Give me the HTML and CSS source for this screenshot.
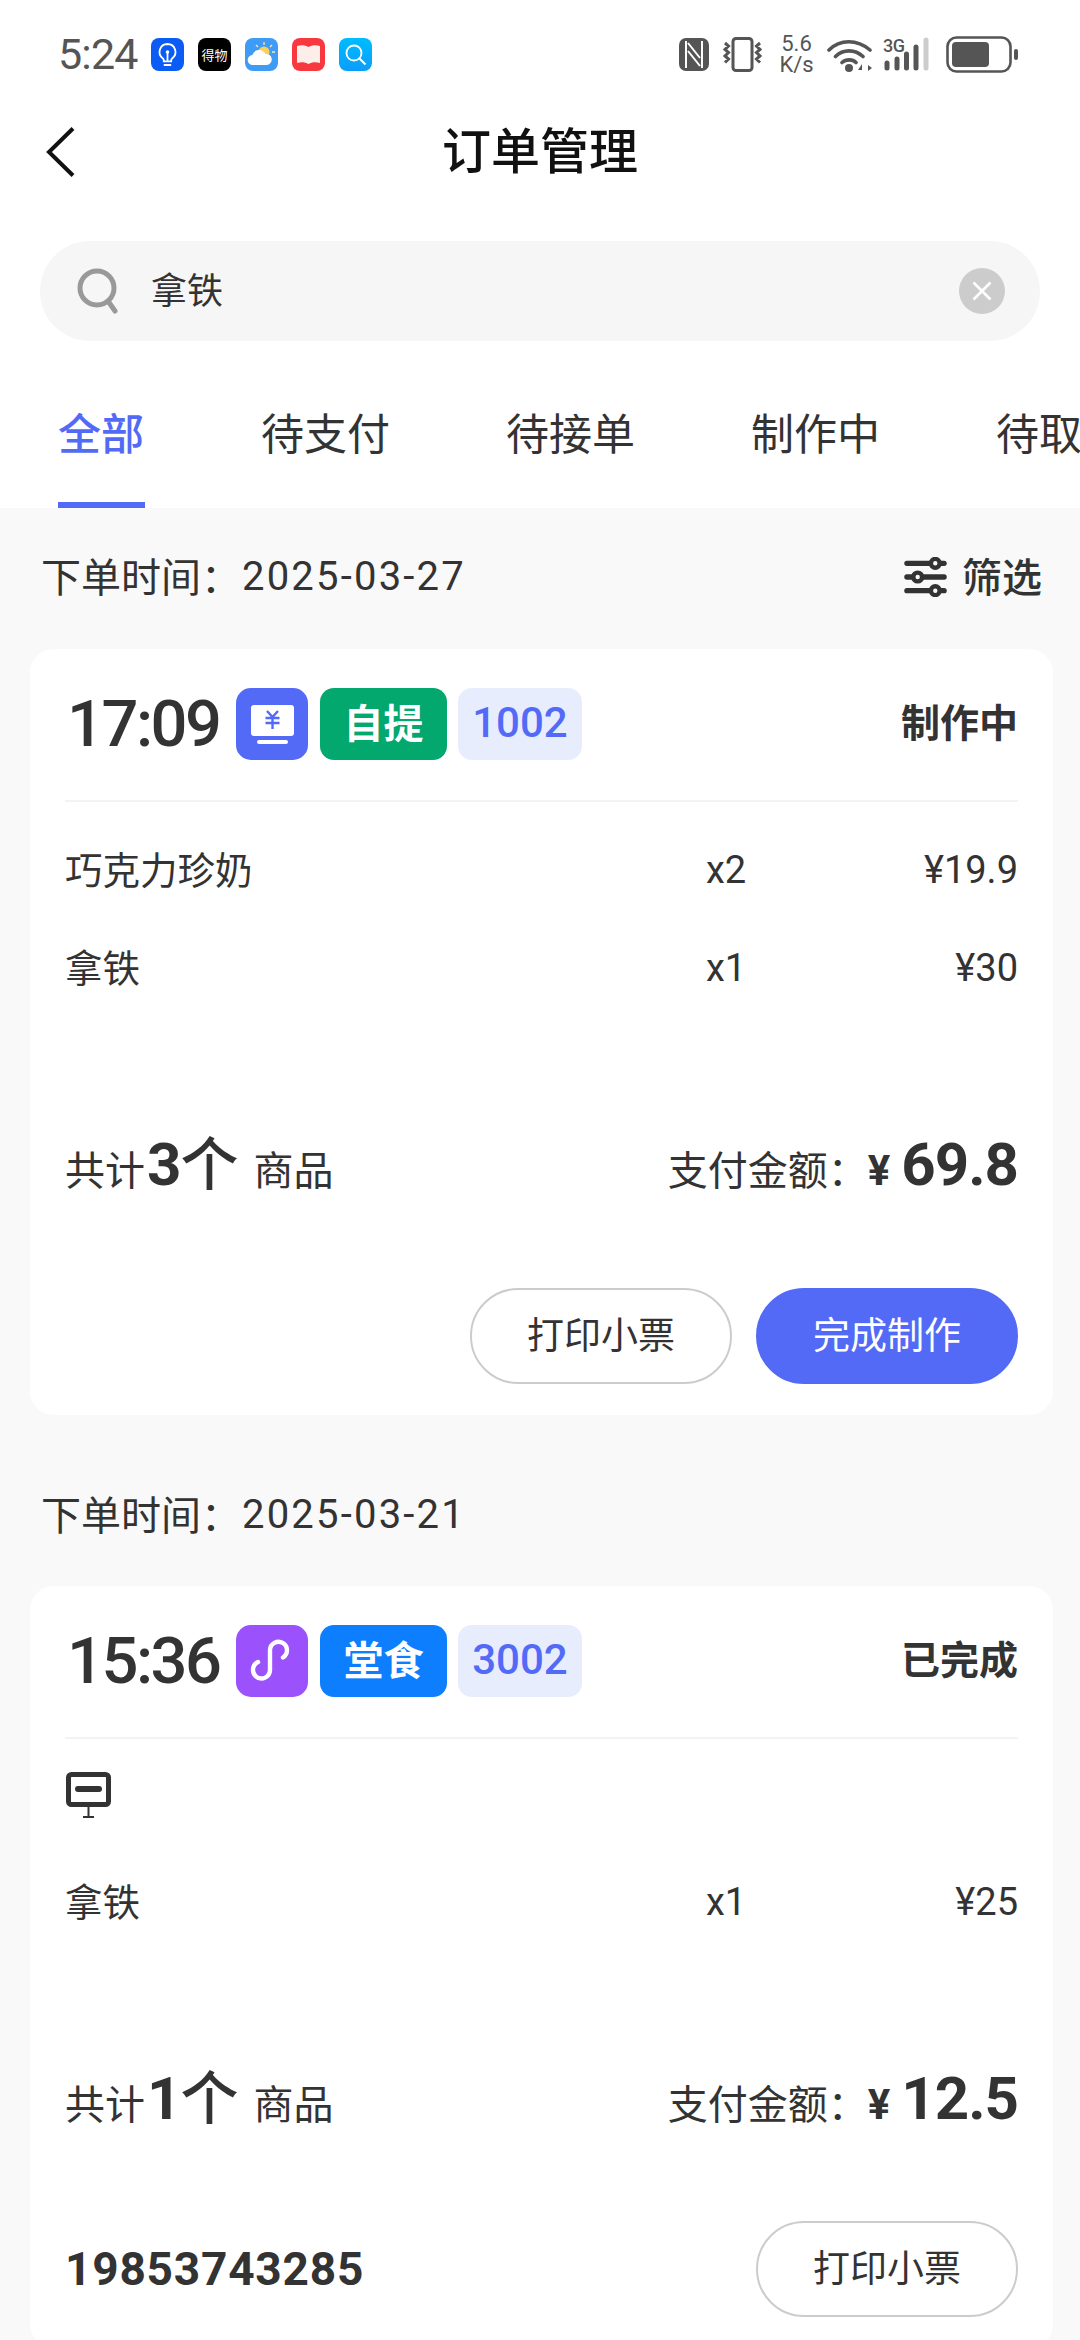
FILE: index.html
```html
<!DOCTYPE html>
<html lang="zh">
<head>
<meta charset="utf-8">
<title>订单管理</title>
<link rel="stylesheet" href="styles.css">
</head>
<body>
<div class="page">
  <header class="top">
    <div class="status">
      <div class="status-left">
        <span class="clock">5:24</span>
        <div class="apps">
          <svg class="app" viewBox="0 0 33 33"><rect width="33" height="33" rx="8" fill="#0b5cf5"/><path d="M16.5 6a8 8 0 0 0-4.6 14.5c.6.5.9 1 .9 1.8v1h7.4v-1c0-.8.3-1.3.9-1.8A8 8 0 0 0 16.500 6z" fill="none" stroke="#fff" stroke-width="1.800"/><path d="M16.500 14v9M13.500 27h6" stroke="#fff" stroke-width="1.800" stroke-linecap="round"/><circle cx="16.500" cy="14" r="1.800" fill="#fff"/></svg>
          <span class="app app-black">得物</span>
          <svg class="app" viewBox="0 0 33 33"><rect width="33" height="33" rx="8" fill="#3f9cf6"/><circle cx="19" cy="14" r="5.500" fill="#fbcf5a"/><path d="M19 4v3M27 7l-2 2M30 14h-3M11 7l2 2" stroke="#ffe9ae" stroke-width="1.300"/><path d="M8 27a5 5 0 0 1-.6-10 7 7 0 0 1 13-1 5.500 5.500 0 0 1 1.600 11z" fill="#fff"/></svg>
          <svg class="app" viewBox="0 0 33 33"><rect width="33" height="33" rx="8" fill="#f8383f"/><path d="M5 8c4-1 8-1 11.500 1C20 7 24 7 28 8v17c-4-1-8-1-11.500 1C13 24 9 24 5 25z" fill="#fdeeea"/></svg>
          <svg class="app" viewBox="0 0 33 33"><defs><linearGradient id="sg" x1="0" y1="0" x2="0" y2="1"><stop offset="0" stop-color="#00bcff"/><stop offset="1" stop-color="#0a9dfb"/></linearGradient></defs><rect width="33" height="33" rx="8" fill="url(#sg)"/><circle cx="15" cy="15" r="7.500" fill="none" stroke="#fff" stroke-width="1.800"/><path d="M20.500 20.500l6 6" stroke="#fff" stroke-width="2"/></svg>
        </div>
      </div>
      <div class="status-right">
        <svg class="ic-nfc" viewBox="0 0 30 33"><rect width="30" height="33" rx="7" fill="#555"/><path d="M7 3v27M23 3v27M9 5l12 15M9 13l12 15" fill="none" stroke="#fff" stroke-width="2"/></svg>
        <svg class="ic-vib" viewBox="0 0 41 35"><rect x="11" y="1.500" width="19" height="32" rx="3" fill="none" stroke="#555" stroke-width="3"/><path d="M3 6l3.500 3-3.500 3.500 3.500 3-3.500 3.500 3.500 3-3.500 3.500M38 6l-3.500 3 3.500 3.500-3.500 3 3.500 3.500-3.500 3 3.500 3.500" fill="none" stroke="#555" stroke-width="3"/></svg>
        <div class="speed"><span>5.6</span><span>K/s</span></div>
        <svg class="ic-wifi" viewBox="0 0 45 35"><path d="M2 13C13 2 30 2 43 13M8.500 19.500C16 12 28 12 36 19.500M15 25.500c4-3.500 10.500-3.500 14 0" fill="none" stroke="#555" stroke-width="3.600" stroke-linecap="round"/><circle cx="22" cy="31" r="4" fill="#555"/><path d="M35 27l-4 6h4zM38 26v9M41 28v6l4-3z" fill="#555"/></svg>
        <div class="signal">
          <span class="net">3G</span>
          <svg class="ic-bars" viewBox="0 0 50 35"><path d="M4 26v5M14 22v9M23.500 17v14M33 10v21" stroke="#555" stroke-width="5" stroke-linecap="round"/><path d="M43 3v28" stroke="#ccc" stroke-width="5" stroke-linecap="round"/></svg>
        </div>
        <svg class="ic-batt" viewBox="0 0 72 37"><rect x="1.500" y="1.500" width="63" height="34" rx="9" fill="none" stroke="#555" stroke-width="2.600"/><rect x="6" y="6" width="37" height="25" rx="4" fill="#555"/><rect x="68" y="13" width="4" height="11" rx="2" fill="#555"/></svg>
      </div>
    </div>

    <nav class="nav">
      <svg class="back" viewBox="0 0 30 50"><path d="M27 1.500 3 25l24 23.500" fill="none" stroke="#111" stroke-width="4"/></svg>
      <h1 class="title">订单管理</h1>
    </nav>

    <div class="search">
      <svg class="search-ic" viewBox="0 0 42 46"><circle cx="20" cy="20" r="17" fill="none" stroke="#999" stroke-width="5"/><path d="M31 33l7 10" stroke="#999" stroke-width="5" stroke-linecap="round"/></svg>
      <span class="search-text">拿铁</span>
      <svg class="clear" viewBox="0 0 46 46"><circle cx="23" cy="23" r="23" fill="#ccc"/><path d="M14.500 14.500l17 17M31.500 14.500l-17 17" stroke="#fff" stroke-width="2.600"/></svg>
    </div>

    <div class="tabs">
      <span class="tab tab-on">全部</span>
      <span class="tab">待支付</span>
      <span class="tab">待接单</span>
      <span class="tab">制作中</span>
      <span class="tab">待取餐</span>
    </div>
  </header>

  <main class="list">
    <div class="date-row">
      <span class="date"><span class="date-label">下单时间：</span><span class="date-num">2025-03-27</span></span>
      <span class="filter">
        <svg class="filter-ic" viewBox="0 0 44 40"><path d="M3 6h38M3 20h38M3 34h38" stroke="#333" stroke-width="5.500" stroke-linecap="round"/><circle cx="32" cy="6" r="4.500" fill="#f9f9f9" stroke="#333" stroke-width="4.500"/><circle cx="14" cy="20" r="4.500" fill="#f9f9f9" stroke="#333" stroke-width="4.500"/><circle cx="32" cy="34" r="4.500" fill="#f9f9f9" stroke="#333" stroke-width="4.500"/></svg>
        <span class="filter-text">筛选</span>
      </span>
    </div>

    <section class="card">
      <div class="card-head">
        <span class="time">17:09</span>
        <svg class="src" viewBox="0 0 72 72"><rect width="72" height="72" rx="15" fill="#536af6"/><rect x="15" y="17" width="43" height="31" rx="3" fill="#fff"/><rect x="21" y="52" width="31" height="4" rx="2" fill="#fff"/><path d="M31 23l5.500 6 5.500-6M29.500 30h14M29.500 35h14M36.500 29v12" fill="none" stroke="#536af6" stroke-width="2.400"/></svg>
        <span class="kind kind-green">自提</span>
        <span class="code">1002</span>
        <span class="state">制作中</span>
      </div>
      <div class="items">
        <div class="item"><span class="item-name">巧克力珍奶</span><span class="item-qty">x2</span><span class="item-price">¥19.9</span></div>
        <div class="item"><span class="item-name">拿铁</span><span class="item-qty">x1</span><span class="item-price">¥30</span></div>
      </div>
      <div class="summary">
        <span class="count">共计<b class="count-num">3</b><b class="count-unit">个</b><span class="count-tail">商品</span></span>
        <span class="pay">支付金额：<b class="yen">¥</b><b class="amount">69.8</b></span>
      </div>
      <div class="actions">
        <span class="btn">打印小票</span>
        <span class="btn btn-main">完成制作</span>
      </div>
    </section>

    <div class="date-row date-row-next">
      <span class="date"><span class="date-label">下单时间：</span><span class="date-num">2025-03-21</span></span>
    </div>

    <section class="card">
      <div class="card-head">
        <span class="time">15:36</span>
        <svg class="src" viewBox="0 0 72 72"><rect width="72" height="72" rx="15" fill="#9b51fb"/><path d="M21 38c-4 2-5 5-5 8a8.500 8.500 0 0 0 17 0V26a8.500 8.500 0 1 1 13 7.500" transform="translate(1 -1)" fill="none" stroke="#fff" stroke-width="4.400" stroke-linecap="round"/></svg>
        <span class="kind kind-blue">堂食</span>
        <span class="code">3002</span>
        <span class="state">已完成</span>
      </div>
      <div class="table-ic-row">
        <svg class="table-ic" viewBox="0 0 45 46"><rect x="2.500" y="2.500" width="40" height="30" rx="3" fill="none" stroke="#333" stroke-width="5"/><rect x="9" y="14" width="27" height="6" rx="3" fill="#333"/><path d="M22.500 34v11M17 45h11" stroke="#333" stroke-width="2"/></svg>
      </div>
      <div class="items items-tight">
        <div class="item"><span class="item-name">拿铁</span><span class="item-qty">x1</span><span class="item-price">¥25</span></div>
      </div>
      <div class="summary">
        <span class="count">共计<b class="count-num">1</b><b class="count-unit">个</b><span class="count-tail">商品</span></span>
        <span class="pay">支付金额：<b class="yen">¥</b><b class="amount">12.5</b></span>
      </div>
      <div class="actions actions-split">
        <span class="phone">19853743285</span>
        <span class="btn">打印小票</span>
      </div>
    </section>
  </main>
</div>
</body>
</html>
```

FILE: styles.css
```css
* { box-sizing: border-box; margin: 0; padding: 0; }
html, body { width: 1080px; height: 2340px; overflow: hidden; background: #f9f9f9; }
body { font-family: "Noto Sans CJK SC", "Noto Sans", sans-serif; color: #333; }
.page { width: 1080px; height: 2340px; overflow: hidden; display: flex; flex-direction: column; }

.top { background: #fff; }
.status { height: 108px; display: flex; align-items: center; justify-content: space-between; padding: 0 62px 0 58px; }
.status-left { display: flex; align-items: center; gap: 11px; }
.clock { font: 400 43px/1 Roboto, sans-serif; color: #555; letter-spacing: -0.8px; width: 82px; }
.apps { display: flex; gap: 14px; }
.app { width: 33px; height: 33px; display: block; }
.app-black { background: #000; border-radius: 8px; color: #fff; font-size: 13px; line-height: 33px; text-align: center; white-space: nowrap; overflow: hidden; }
.status-right { display: flex; align-items: center; }
.ic-nfc { width: 30px; height: 33px; }
.ic-vib { width: 41px; height: 35px; margin-left: 13px; }
.speed { display: flex; flex-direction: column; align-items: center; width: 33px; margin-left: 17px; font: 400 22px/21px Roboto, sans-serif; color: #555; }
.ic-wifi { width: 45px; height: 35px; margin-left: 14px; }
.signal { position: relative; width: 50px; height: 35px; margin-left: 11px; }
.net { position: absolute; left: 0; top: -1px; font: 500 18px/20px Roboto, sans-serif; color: #555; letter-spacing: -0.5px; }
.ic-bars { width: 50px; height: 35px; display: block; }
.ic-batt { width: 72px; height: 37px; margin-left: 13px; }

.nav { height: 84px; display: flex; align-items: center; justify-content: center; position: relative; }
.back { position: absolute; left: 46px; top: 19px; width: 30px; height: 50px; }
.title { font-size: 49px; font-weight: 500; color: #111; line-height: 1; padding-bottom: 6px; }

.search { height: 100px; margin: 49px 40px 0; border-radius: 50px; background: #f6f6f6; display: flex; align-items: center; padding: 0 35px 0 37px; }
.search-ic { width: 42px; height: 46px; }
.search-text { font-size: 36px; color: #333; margin-left: 32px; flex: 1; padding-bottom: 6px; }
.clear { width: 46px; height: 46px; }

.tabs { display: flex; gap: 116px; height: 167px; padding: 62px 0 0 58px; overflow: hidden; white-space: nowrap; }
.tab { font-size: 43px; line-height: 56px; color: #333; height: 105px; flex: none; }
.tab-on { color: #536af6; font-weight: 500; border-bottom: 6px solid #536af6; width: 87px; }

.list { padding: 0 27px 0 30px; }
.date-row { height: 141px; padding: 0 0 3px 11px; display: flex; align-items: center; justify-content: space-between; }
.date-row-next { height: 171px; padding: 32px 0 3px 11px; }
.date { font-size: 40px; color: #333; display: flex; align-items: center; }
.date-label { width: 201px; padding-bottom: 4px; }
.date-num { font-family: Roboto, sans-serif; font-size: 40px; letter-spacing: 2.2px; padding-bottom: 2px; }
.filter { display: flex; align-items: center; gap: 15px; padding-right: 11px; color: #333; }
.filter-text { font-size: 40px; font-weight: 500; padding-bottom: 4px; }
.filter-ic { width: 43px; height: 40px; }

.card { background: #fff; border-radius: 24px; padding: 40px 35px 31px; }
.card-head { height: 113px; padding-bottom: 41px; display: flex; align-items: center; border-bottom: 2px solid #f3f3f3; }
.time { font: 500 65px/72px Roboto, sans-serif; color: #333; width: 171px; padding-left: 2px; letter-spacing: -2.5px; white-space: nowrap; }
.src { width: 72px; height: 72px; }
.kind { width: 127px; height: 72px; margin-left: 12px; border-radius: 14px; color: #fff; font-size: 40px; font-weight: 700; line-height: 66px; text-align: center; }
.kind-green { background: #03a86f; }
.kind-blue { background: #0d7efe; }
.code { width: 124px; height: 72px; margin-left: 11px; border-radius: 14px; background: #e8edfd; color: #536af6; font: 500 42px/70px Roboto, sans-serif; text-align: center; }
.state { margin-left: auto; font-size: 39px; font-weight: 700; color: #333; line-height: 1; padding-bottom: 8px; }

.items { padding-top: 19px; }
.items-tight { padding-top: 0; }
.item { height: 98px; display: flex; align-items: center; color: #333; }
.item-name { width: 641px; padding: 0 0 6px 0; font-size: 37.5px; }
.item-qty { font-family: Roboto, sans-serif; font-size: 38px; }
.item-price { margin-left: auto; font-family: Roboto, sans-serif; font-size: 38px; }
.table-ic-row { padding-top: 33px; height: 114px; }
.table-ic { width: 45px; height: 46px; display: block; margin-left: 1px; }

.summary { height: 80px; margin-top: 111px; padding-top: 3px; display: flex; align-items: baseline; justify-content: space-between; }
.count { font-size: 40px; line-height: 1; display: flex; align-items: baseline; }
.count-num { font: 700 60px/1 Roboto, sans-serif; margin-left: 2px; }
.count-unit { font: 500 58px/1 "Noto Sans CJK SC", sans-serif; margin-left: -1px; }
.count-tail { margin-left: 15px; }
.pay { font-size: 40px; line-height: 1; display: flex; align-items: baseline; }
.yen { font: 700 42px/1 Roboto, sans-serif; margin: 0 11px 0 0; }
.amount { font: 700 60px/1 Roboto, sans-serif; letter-spacing: -1px; }

.actions { height: 96px; margin-top: 80px; display: flex; justify-content: flex-end; gap: 24px; }
.actions-split { justify-content: space-between; margin-top: 79px; align-items: center; }
.btn { width: 262px; height: 96px; border-radius: 48px; border: 2px solid #ccc; font-size: 37px; line-height: 86px; text-align: center; color: #333; background: #fff; }
.btn-main { background: #536af6; border-color: #536af6; color: #fff; }
.phone { font: 700 46px/1 Roboto, sans-serif; color: #333; letter-spacing: 0.8px; }
```
